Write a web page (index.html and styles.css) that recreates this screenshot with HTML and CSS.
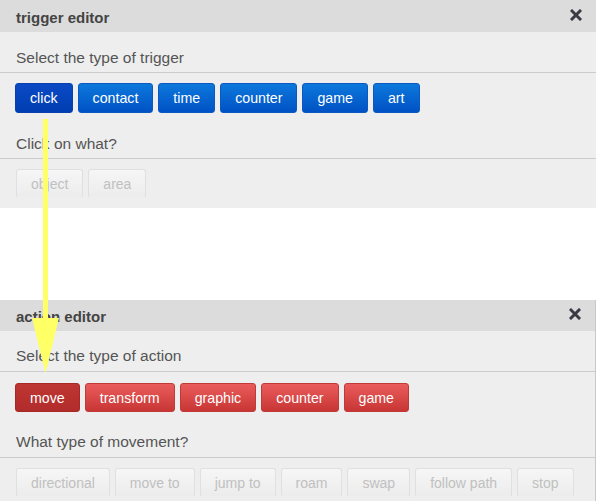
FILE: index.html
```html
<!DOCTYPE html>
<html>
<head>
<meta charset="utf-8">
<link rel="stylesheet" href="styles.css">
</head>
<body>
<div class="page">
  <section class="panel">
    <div class="panel-head">
      <span class="panel-title">trigger editor</span>
      <svg class="close" width="12" height="12" viewBox="0 0 12 12"><path d="M2 2L10 10M10 2L2 10" stroke="#3a3a44" stroke-width="3" stroke-linecap="square"/></svg>
    </div>
    <div class="label">Select the type of trigger</div>
    <div class="row">
      <span class="btn blue active">click</span>
      <span class="btn blue">contact</span>
      <span class="btn blue">time</span>
      <span class="btn blue">counter</span>
      <span class="btn blue">game</span>
      <span class="btn blue">art</span>
    </div>
    <div class="label">Click on what?</div>
    <div class="row last">
      <span class="btn off">object</span>
      <span class="btn off">area</span>
    </div>
  </section>

  <section class="panel second">
    <div class="panel-head">
      <span class="panel-title">action editor</span>
      <svg class="close" width="12" height="12" viewBox="0 0 12 12"><path d="M2 2L10 10M10 2L2 10" stroke="#3a3a44" stroke-width="3" stroke-linecap="square"/></svg>
    </div>
    <div class="label">Select the type of action</div>
    <div class="row">
      <span class="btn red active">move</span>
      <span class="btn red">transform</span>
      <span class="btn red">graphic</span>
      <span class="btn red">counter</span>
      <span class="btn red">game</span>
    </div>
    <div class="label">What type of movement?</div>
    <div class="row last">
      <span class="btn off">directional</span>
      <span class="btn off">move to</span>
      <span class="btn off">jump to</span>
      <span class="btn off">roam</span>
      <span class="btn off">swap</span>
      <span class="btn off">follow path</span>
      <span class="btn off">stop</span>
    </div>
  </section>

  <svg class="arrow" width="80" height="380" viewBox="0 0 80 380">
    <rect x="43" y="119" width="5" height="205" fill="#ffff66"/>
    <polygon points="32,318 59,318 45.5,373" fill="#ffff66"/>
  </svg>
</div>
</body>
</html>
```
FILE: styles.css
```css
html, body {
  margin: 0;
  padding: 0;
  background: #ffffff;
}
.page {
  position: relative;
  width: 596px;
  height: 501px;
  overflow: hidden;
  font-family: "Liberation Sans", Arial, sans-serif;
}
.panel {
  background: #eeeeee;
  width: 596px;
  height: 208px;
  box-sizing: border-box;
}
.panel.second {
  margin-top: 92px;
  height: 201px;
  border-right: 1px solid #c8c8c8;
}
.panel-head {
  height: 32px;
  box-sizing: border-box;
  background: #dcdcdc;
  display: flex;
  align-items: center;
  justify-content: space-between;
  padding: 3px 14px 0 16px;
}
.second .panel-head {
  height: 31px;
  padding-top: 2px;
}
.panel-title {
  font-weight: bold;
  font-size: 15px;
  color: #444;
}
.close {
  margin-top: -6px;
}
.label {
  padding: 17px 16px 5px;
  font-size: 15.5px;
  line-height: 18px;
  color: #555;
  border-bottom: 1px solid #cccccc;
}
.second .label {
  padding: 16px 16px 6px;
}
.row {
  display: flex;
  gap: 5px;
  padding: 10px 15px 5px;
}
.second .row {
  padding-top: 11px;
}
.second .row.last {
  padding-top: 10px;
}
.row.last {
  padding-left: 16px;
}
.btn {
  display: inline-flex;
  align-items: center;
  height: 30px;
  padding: 0 14px;
  box-sizing: border-box;
  border-radius: 3px;
  font-size: 14.2px;
  color: #fff;
}
.btn.blue {
  background: linear-gradient(#0c78dc, #0052c4);
  border: 1px solid #0a58c0;
}
.btn.blue.active {
  background: linear-gradient(#0a4ac4, #003db2);
  border-color: #0840b0;
}
.btn.red {
  background: linear-gradient(#ea5c5c, #c73634);
  border: 1px solid #c03a38;
  height: 29px;
}
.btn.red.active {
  background: linear-gradient(#bf3633, #b02c2a);
  border-color: #a82826;
}
.btn.off {
  height: 29px;
  font-size: 14px;
  color: #c0c0c0;
  background: linear-gradient(#f6f6f6, #ececec);
  border: 1px solid #e0e0e0;
  border-bottom-color: #eeeeee;
}
.arrow {
  position: absolute;
  left: 0;
  top: 0;
}
```
